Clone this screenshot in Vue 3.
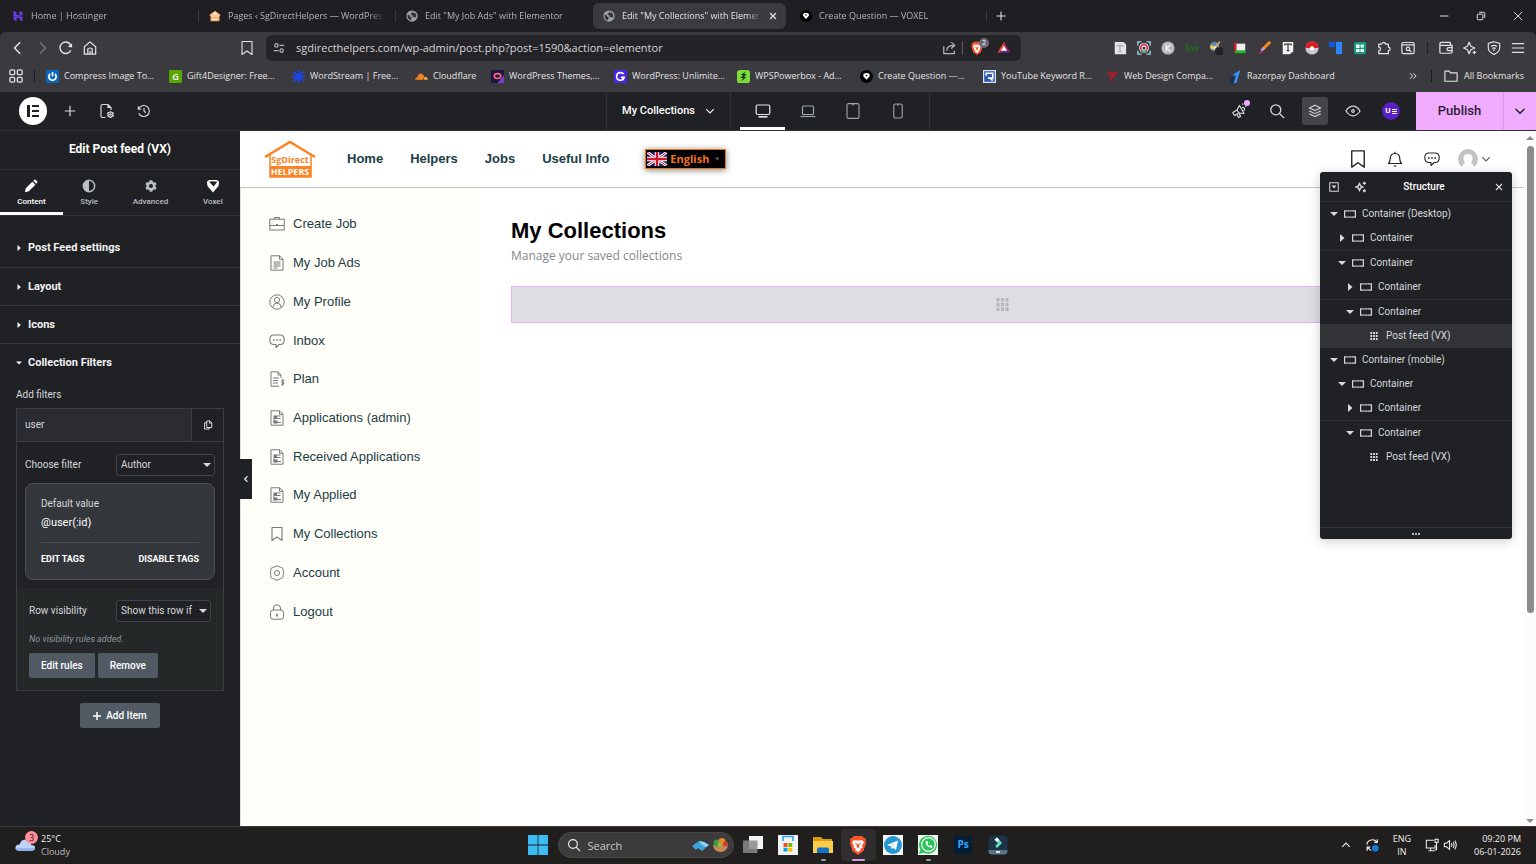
<script setup>
import { ref } from 'vue'

// Browser tabs
const tabs = [
  { icon: 'hostinger', title: 'Home | Hostinger' },
  { icon: 'house', title: 'Pages ‹ SgDirectHelpers — WordPress' },
  { icon: 'globe', title: 'Edit "My Job Ads" with Elementor' },
  { icon: 'globe', title: 'Edit "My Collections" with Elementor', active: true },
  { icon: 'voxel-round', title: 'Create Question — VOXEL' }
]

// Entries with a "text" show lettering instead of a drawn icon
const extensions = [
  { icon: 'ext-text', label: 'Text tool' },
  { icon: 'ext-camera', label: 'Screen capture' },
  { icon: 'ext-k', label: 'Keywords' },
  { icon: 'ext-bw', label: 'BuiltWith', text: 'bw' },
  { icon: 'ext-picker', label: 'Color picker' },
  { icon: 'ext-flag', label: 'Screen flag' },
  { icon: 'ext-brush', label: 'Brush' },
  { icon: 'ext-type', label: 'Font finder' },
  { icon: 'ext-ball', label: 'Ball' },
  { icon: 'ext-blue', label: 'Blocks' },
  { icon: 'ext-green', label: 'Apps' },
  { icon: 'puzzle', label: 'Extensions' },
  { icon: 'window-search', label: 'Search tabs' }
]

const browserTools = [
  { icon: 'wallet', label: 'Wallet' },
  { icon: 'leo', label: 'Leo AI' },
  { icon: 'vpn', label: 'VPN' },
  { icon: 'menu', label: 'Menu' }
]

const bookmarks = [
  { icon: 'bm-power', title: 'Compress Image To...' },
  { icon: 'bm-g', title: 'Gift4Designer: Free...', text: 'G' },
  { icon: 'bm-burst', title: 'WordStream | Free...' },
  { icon: 'bm-cloud', title: 'Cloudflare', short: true },
  { icon: 'bm-theme', title: 'WordPress Themes,...' },
  { icon: 'bm-gblue', title: 'WordPress: Unlimite...' },
  { icon: 'bm-wps', title: 'WPSPowerbox - Ad...' },
  { icon: 'voxel-round', title: 'Create Question —...' },
  { icon: 'bm-yt', title: 'YouTube Keyword R...' },
  { icon: 'bm-seven', title: 'Web Design Compa...' },
  { icon: 'bm-razor', title: 'Razorpay Dashboard' }
]

// Editor
const devices = ['desktop', 'laptop', 'tablet', 'mobile']
const activeDevice = ref('desktop')

const panelTabs = [
  { icon: 'pencil', label: 'Content' },
  { icon: 'contrast', label: 'Style' },
  { icon: 'gear', label: 'Advanced' },
  { icon: 'voxel', label: 'Voxel' }
]
const activePanelTab = ref('Content')

const sections = ['Post Feed settings', 'Layout', 'Icons']

const filter = ref('Author')
const visibility = ref('Show this row if')

// Site preview
const siteNav = ['Home', 'Helpers', 'Jobs', 'Useful Info']

const accountMenu = [
  { icon: 'briefcase', label: 'Create Job' },
  { icon: 'doc', label: 'My Job Ads' },
  { icon: 'profile', label: 'My Profile' },
  { icon: 'chat', label: 'Inbox' },
  { icon: 'plan', label: 'Plan' },
  { icon: 'resume', label: 'Applications (admin)' },
  { icon: 'resume', label: 'Received Applications' },
  { icon: 'resume', label: 'My Applied' },
  { icon: 'bookmark', label: 'My Collections' },
  { icon: 'account', label: 'Account' },
  { icon: 'lock', label: 'Logout' }
]

// Structure tree
const tree = [
  { level: 0, open: true, label: 'Container (Desktop)' },
  { level: 1, open: false, label: 'Container' },
  { level: 1, open: true, label: 'Container', line: true },
  { level: 2, open: false, label: 'Container' },
  { level: 2, open: true, label: 'Container', line: true },
  { level: 3, widget: true, label: 'Post feed (VX)', selected: true },
  { level: 0, open: true, label: 'Container (mobile)' },
  { level: 1, open: true, label: 'Container' },
  { level: 2, open: false, label: 'Container' },
  { level: 2, open: true, label: 'Container', line: true },
  { level: 3, widget: true, label: 'Post feed (VX)' }
]

const taskApps = [
  { icon: 'task-view', label: 'Task view' },
  { icon: 'store', label: 'Microsoft Store' },
  { icon: 'explorer', label: 'File Explorer', running: true },
  { icon: 'brave', label: 'Brave', active: true },
  { icon: 'telegram', label: 'Telegram' },
  { icon: 'whatsapp', label: 'WhatsApp', running: true },
  { icon: 'photoshop', label: 'Photoshop', text: 'Ps' },
  { icon: 'filmora', label: 'Filmora' }
]
</script>

<template>
  <div class="screen">
    <!-- Icon sprite -->
    <svg class="sprite" aria-hidden="true">
      <symbol id="hostinger" viewBox="0 0 16 16"><path fill="#673de6" d="M2 1l4 2v3.500h4.500l3.500 2H2zM10 1l4 2v4.500l-4-2zM2 8.500l4 2V15l-4-2zM2 9h12v6l-4-2v-2.500H5z" /></symbol>
      <symbol id="house" viewBox="0 0 16 16"><path fill="#f6ad6c" d="M8 1l7 5v2h-1v7H2V8H1V6z" /><path d="M3 8h10M4 12.500h8" stroke="#fff" stroke-width="1.500" stroke-dasharray="2 .6" /><path d="M4 6l4-3 4 3z" fill="#fff" /></symbol>
      <symbol id="globe" viewBox="0 0 16 16"><circle cx="8" cy="8" r="7.500" fill="#9aa0a6" /><path fill="#303136" d="M9 2c-1 1-.5 2-2 2.500S6 6 7.500 6.500s2 1.500 1 3-3-1-4-2.500-2.500-.5-2.500.5c0 3 2 5.500 4.500 6 .5-1.500 0-2 1-3 1.500-.5 2-1.500 3.500-1 1 0 1.500.5 2.500-.5.5-3-1-5-2-5.500-.5 1-2 .5-2.500-1.500z" /></symbol>
      <symbol id="voxel-round" viewBox="0 0 16 16"><circle cx="8" cy="8" r="8" fill="#000" /><path fill="#fff" d="M4 5.500L6 4h4l2 1.500-.3 2.500L8 12 4.300 8z" /><path d="M6.500 6h3L8 8z" fill="#000" /></symbol>
      <symbol id="voxel" viewBox="0 0 16 16"><path fill="#fff" d="M1 3l2.500-2h9L15 3l-.7 5L8 15.500 1.700 8z" /><path d="M3.500 3q4-1 9.500 0L8.700 8.500z" fill="#1f2124" /></symbol>
      <symbol id="close" viewBox="0 0 16 16"><path d="M2 2l12 12M14 2L2 14" stroke="currentColor" stroke-width="2.400" /></symbol>
      <symbol id="x-thin" viewBox="0 0 16 16"><path d="M1.500 1.500l13 13M14.500 1.500l-13 13" stroke="currentColor" stroke-width="1.500" /></symbol>
      <symbol id="plus" viewBox="0 0 16 16"><path d="M8 2v12M2 8h12" stroke="currentColor" stroke-width="1.400" /></symbol>
      <symbol id="plus-bold" viewBox="0 0 16 16"><path d="M8 0v16M0 8h16" stroke="currentColor" stroke-width="3" /></symbol>
      <symbol id="minimize" viewBox="0 0 16 16"><path d="M2 8h13" stroke="currentColor" stroke-width="1.600" /></symbol>
      <symbol id="restore" viewBox="0 0 16 16" fill="none"><rect x="2" y="5" width="9" height="9" rx="1.500" stroke="currentColor" stroke-width="1.600" /><path d="M5 2h6.500q2.500 0 2.500 2.500V11" stroke="currentColor" stroke-width="1.600" /></symbol>
      <symbol id="back" viewBox="0 0 16 16"><path d="M10.500 1.500L4 8l6.500 6.500" fill="none" stroke="currentColor" stroke-width="1.700" /></symbol>
      <symbol id="back-bold" viewBox="0 0 16 16"><path d="M11 2.500L5.500 8l5.500 5.500" fill="none" stroke="currentColor" stroke-width="2.800" /></symbol>
      <symbol id="forward" viewBox="0 0 16 16"><path d="M5.500 1.500L12 8l-6.500 6.500" fill="none" stroke="currentColor" stroke-width="1.700" /></symbol>
      <symbol id="reload" viewBox="0 0 16 16"><path d="M13.500 10.500A6.500 6.500 0 1 1 13 4" fill="none" stroke="currentColor" stroke-width="1.600" /><path d="M15 2.500v5l-5-1z" fill="currentColor" /></symbol>
      <symbol id="home" viewBox="0 0 16 16"><path d="M1.500 6.500L8 1l6.500 5.500V15h-13zM5.500 15V9.500Q5.500 8 8 8t2.500 1.500V15M8 11v4" fill="none" stroke="currentColor" stroke-width="1.400" stroke-linejoin="round" /></symbol>
      <symbol id="bookmark" viewBox="0 0 16 16"><path d="M3 1.500h10v13l-5-3.500-5 3.500z" fill="none" stroke="currentColor" stroke-width="1.100" stroke-linejoin="round" /></symbol>
      <symbol id="tune" viewBox="0 0 16 16"><g fill="none" stroke="currentColor" stroke-width="1.700"><circle cx="4.500" cy="4.500" r="2.200" /><path d="M8.500 4.500H15M1 11.500h6.500" /><circle cx="11.500" cy="11.500" r="2.200" /></g></symbol>
      <symbol id="share" viewBox="0 0 16 16"><path d="M2 6v8.500h12V11M5.500 11c0-4 3-6 8-6M10.500 1.500L14.500 5l-4 3.500" fill="none" stroke="currentColor" stroke-width="1.500" /></symbol>
      <symbol id="brave" viewBox="0 0 20 20"><path fill="#fb542b" d="M6 1h8l2 2 2 .5-.5 3L18 8l-2.500 8L10 20l-5.500-4L2 8l.5-1.500L2 3.500 4 3z" /><path fill="#fff" d="M6 5l2 .5h4l2-.5 2 2.500-2 3 .5 2-2.500 1.500 1 1-3 2-3-2 1-1L5.500 12.500l.5-2-2-3z" /><path fill="#fb542b" d="M6.500 7.500l2.500 1-.5 1.500zM13.500 7.500l-2.500 1 .5 1.500zM8.500 12L10 13l1.500-1-.5-3H9z" /></symbol>
      <symbol id="bat" viewBox="0 0 16 16"><path d="M8 1l3.200 6L8 8.500 5 13.500H.5z" fill="#ff4724" /><path d="M8 1l7.500 12.500-4-2.500L8 5z" fill="#9e1f63" /><path d="M.5 13.500h15L11.500 11h-7z" fill="#662d91" /><path d="M8 5.500l3.500 5.500h-7z" fill="#fff" /></symbol>

      <symbol id="ext-text" viewBox="0 0 16 16"><path d="M2 1h10l3 3v11H2z" fill="#e4e4e4" /><path d="M5 5h6v1.500M5 6.500V5M8 5v7M6.500 12h3" stroke="#aaa" stroke-width="1.500" fill="none" /></symbol>
      <symbol id="ext-camera" viewBox="0 0 16 16"><path d="M1 5V1h4M11 1h4v4M15 11v4h-4M5 15H1v-4" fill="none" stroke="#8fd6ea" stroke-width="1.600" /><circle cx="8" cy="8" r="5.500" fill="#fff" /><circle cx="8" cy="8" r="3.800" fill="none" stroke="#e33b42" stroke-width="2" /><path d="M5 11a4 4 0 0 0 6 0" stroke="#27b08b" stroke-width="2" fill="none" /><circle cx="8" cy="8" r="1.800" fill="#29356c" /></symbol>
      <symbol id="ext-k" viewBox="0 0 16 16"><circle cx="8" cy="8" r="7.500" fill="#b9b9b9" /><path d="M6 4v8M11 4L6.500 8.200 11 12" stroke="#f2f2f2" stroke-width="1.600" fill="none" /></symbol>
      <symbol id="ext-picker" viewBox="0 0 18 18"><circle cx="7" cy="7" r="6" fill="#5b86b5" /><path d="M1 7q3-3 6 0t6-1l-2 5H3z" fill="#f3c842" /><path d="M14 1L7 9" stroke="#e6b46a" stroke-width="2" /><circle cx="8" cy="9" r="2" fill="#fff" /><rect x="8" y="8" width="10" height="10" rx="2.500" fill="#232227" /></symbol>
      <symbol id="ext-flag" viewBox="0 0 16 16"><path d="M1 2h3v11H2z" fill="#e32222" /><path d="M4 3h10v8H4z" fill="#eee" /><path d="M3 11h11l1 3H2z" fill="#18c018" /></symbol>
      <symbol id="ext-brush" viewBox="0 0 16 16"><path d="M14 2L8 8" stroke="#f28c1c" stroke-width="3.500" stroke-linecap="round" /><path d="M8 8l-3 3" stroke="#b9a1d9" stroke-width="3" /><path d="M5 10l2 2-4 2.500-1-.5z" fill="#d5395b" /></symbol>
      <symbol id="ext-type" viewBox="0 0 16 16"><path d="M2 1h12v11l-4 3H2z" fill="#f2f2f2" /><path d="M4.500 5V3.500h7V5M8 3.500V11M6.500 11h3" stroke="#333" stroke-width="1.300" fill="none" /></symbol>
      <symbol id="ext-ball" viewBox="0 0 16 16"><circle cx="8" cy="8" r="7.500" fill="#c9c9c9" /><path d="M.5 8a7.500 7.500 0 0 1 15 0z" fill="#e01d1d" /><circle cx="8" cy="8.500" r="2.500" fill="#fff" /></symbol>
      <symbol id="ext-blue" viewBox="0 0 16 16"><path d="M0 1h7v6H0z" fill="#0b5be0" /><path d="M8 1h7v14H8z" fill="#2a86ff" /></symbol>
      <symbol id="ext-green" viewBox="0 0 16 16"><rect x="1" y="1" width="14" height="14" rx="2" fill="#139a80" /><path d="M3.500 4h4v4h-4zM3.500 9h4v3.500h-4zM8.500 9h4v3.500h-4z" fill="#fff" /><circle cx="10.500" cy="5.800" r="2.200" fill="#d3f3ea" /></symbol>
      <symbol id="puzzle" viewBox="0 0 16 16"><path d="M2 3.500h3.500a2 2 0 1 1 4 0H13V7a2 2 0 1 1 0 4v3.500H2V11a2 2 0 1 0 0-4z" fill="none" stroke="currentColor" stroke-width="1.400" stroke-linejoin="round" /></symbol>
      <symbol id="window-search" viewBox="0 0 16 16"><g fill="none" stroke="currentColor" stroke-width="1.400"><rect x="1" y="1.700" width="14" height="12.600" rx="1.500" /><path d="M1 4.500h14M9.500 10.500l2.500 2" /><circle cx="8" cy="9" r="2" /></g></symbol>
      <symbol id="wallet" viewBox="0 0 16 16"><g fill="none" stroke="currentColor" stroke-width="1.400"><path d="M13 5V2.500q0-1-1-1H3Q1 1.500 1 3.500v9Q1 14 2.500 14H13q2 0 2-2V5H3Q1 5 1 3.500" /><path d="M15 7.500h-4a1.800 1.800 0 0 0 0 3.600h4" /></g></symbol>
      <symbol id="leo" viewBox="0 0 16 16"><g fill="none" stroke="currentColor" stroke-width="1.400" stroke-linejoin="round"><path d="M7 1.500L9 6l4.500 2L9 10l-2 4.500L5 10 .8 8 5 6z" /><path d="M13 11v4M11 13h4" /></g></symbol>
      <symbol id="vpn" viewBox="0 0 16 16"><g fill="none" stroke="currentColor" stroke-width="1.300"><path d="M8 .8l6.500 2V8c0 4-3.500 6-6.500 7.300C5 14 1.500 12 1.500 8V2.800z" /><path d="M4.500 6.200q3.500-2.400 7 0M6 8.500q2-1.400 4 0" /></g><circle cx="8" cy="10.500" r="1" fill="currentColor" /></symbol>
      <symbol id="menu" viewBox="0 0 16 16"><path d="M1 3h14M1 8h14M1 13h14" stroke="currentColor" stroke-width="1.400" /></symbol>

      <symbol id="apps" viewBox="0 0 16 16"><g fill="none" stroke="currentColor" stroke-width="1.500"><rect x="1" y="1" width="5.500" height="5.500" rx="1.500" /><rect x="9.500" y="1" width="5.500" height="5.500" rx="1.500" /><rect x="1" y="9.500" width="5.500" height="5.500" rx="1.500" /><rect x="9.500" y="9.500" width="5.500" height="5.500" rx="1.500" /></g></symbol>
      <symbol id="bm-power" viewBox="0 0 16 16"><rect width="16" height="16" fill="#0b66b9" /><path d="M5 4.800a4.500 4.500 0 1 0 6 0M8 2.500V8" stroke="#fff" stroke-width="2" fill="none" /></symbol>
      <symbol id="bm-burst" viewBox="0 0 16 16"><path d="M8 1v14M1 8h14M3 3l10 10M13 3L3 13" stroke="#1c45e8" stroke-width="2.400" stroke-linecap="round" /></symbol>
      <symbol id="bm-cloud" viewBox="0 0 16 16"><path d="M0 12q0-3 3-3.200Q4 4 8 4.500q3 .5 3.300 3.500L10 12z" fill="#f48120" /><path d="M10.800 12q.5-4 2-4 3 1 3.200 4z" fill="#faad3f" /></symbol>
      <symbol id="bm-theme" viewBox="0 0 16 16"><rect width="16" height="16" fill="#1b1541" /><path d="M8 16L16 6v10z" fill="#7a3bd0" /><ellipse cx="8" cy="7.500" rx="4" ry="3" fill="none" stroke="#ff6474" stroke-width="2" /></symbol>
      <symbol id="bm-gblue" viewBox="0 0 16 16"><rect width="16" height="16" rx="2" fill="#4527e8" /><path d="M12 5Q10.500 3.200 8 3.200A4.700 4.700 0 1 0 12.500 9H8.500" stroke="#fff" stroke-width="2" fill="none" /></symbol>
      <symbol id="bm-wps" viewBox="0 0 16 16"><rect width="16" height="16" rx="3.500" fill="#7bdc3c" /><path d="M11 1.500L4.500 6 8 6.500 4 9.500l3.500.3L5 14l6.500-5L8.500 8.500 12 5.500 8.700 5z" fill="#17351a" /></symbol>
      <symbol id="bm-yt" viewBox="0 0 16 16"><rect width="16" height="16" fill="#d8e2f5" /><path d="M1.500 1.500h13v13h-13z" fill="#2b57b5" /><path d="M4 7V4h8v6H6M9 10l3 3" stroke="#fff" stroke-width="2" fill="none" /></symbol>
      <symbol id="bm-seven" viewBox="0 0 16 16"><path d="M2 3h12l-4.500 6H8L6 14.500 4.500 13 7 8H3.500L5 6h4.500l.8-1H1z" fill="#d2121a" /></symbol>
      <symbol id="bm-razor" viewBox="0 0 16 16"><path d="M6 5l8-5-5 16H6l3-10-4 2.500z" fill="#3395ff" /><path d="M1 16L3 9.500 7 7l-2.500 9z" fill="#0b2a66" /></symbol>
      <symbol id="more" viewBox="0 0 16 16"><path d="M3 3.500L7.500 8 3 12.500M8.500 3.500L13 8l-4.500 4.500" fill="none" stroke="currentColor" stroke-width="1.600" /></symbol>
      <symbol id="folder" viewBox="0 0 16 16"><path d="M1 2.500h5l1.500 2H15V14H1z" fill="none" stroke="currentColor" stroke-width="1.300" stroke-linejoin="round" /></symbol>

      <symbol id="page-settings" viewBox="0 0 16 16"><g fill="none" stroke="currentColor" stroke-width="1.200"><path d="M6.500 14.500H3.500q-1.500 0-1.500-1.500V3q0-1.500 1.500-1.500H9L12 4.500V7M9 1.500v3h3" /><circle cx="11.500" cy="11.500" r="2.500" /><circle cx="11.500" cy="11.500" r=".7" /><path d="M11.500 8.200v1M11.500 14v1M8.400 9.800l1 .6M13.700 12.600l1 .6M14.600 9.800l-1 .6M9.400 12.600l-1 .6" /></g></symbol>
      <symbol id="history" viewBox="0 0 16 16"><path d="M1.800 6A6.300 6.300 0 1 1 2 10.500M1.500 2.500V6H5M8 4.500V8l2 2" fill="none" stroke="currentColor" stroke-width="1.300" /></symbol>
      <symbol id="chevron" viewBox="0 0 16 16"><path d="M2 5l6 6 6-6" fill="none" stroke="currentColor" stroke-width="1.700" /></symbol>
      <symbol id="desktop" viewBox="0 0 16 16"><g fill="none" stroke="currentColor" stroke-width="1.200"><rect x="1.200" y="2" width="13.600" height="9.500" rx="1.500" /><path d="M3.500 13.800h9" stroke-width="1.600" /></g></symbol>
      <symbol id="laptop" viewBox="0 0 16 16"><g fill="none" stroke="currentColor" stroke-width="1.200"><rect x="2.500" y="3" width="11" height="8.500" rx="1" /><path d="M.5 13.500h15" /></g></symbol>
      <symbol id="tablet" viewBox="0 0 16 16"><g fill="none" stroke="currentColor" stroke-width="1.100"><rect x="2" y=".6" width="12" height="14.800" rx="1.500" /><path d="M7 1.800h2" /></g></symbol>
      <symbol id="mobile" viewBox="0 0 16 16"><g fill="none" stroke="currentColor" stroke-width="1.100"><rect x="3.800" y="1" width="8.400" height="14" rx="1.500" /><path d="M7 2h2" /></g></symbol>
      <symbol id="megaphone" viewBox="0 0 16 16"><g fill="none" stroke="currentColor" stroke-width="1.200" stroke-linejoin="round"><path d="M8.500 2.500l4.500 8-5-.5-4.500 2.500-1.700-3L6 7z" /><path d="M6 7l2 3M6 11.500l1.500 3 2-1-1.200-3M11 4.500q2-.5 2.500 1t-1 2.500M11.500 1.800L12 .6M14 3.500l1.300-.6" /></g></symbol>
      <symbol id="search" viewBox="0 0 16 16"><g fill="none" stroke="currentColor" stroke-width="1.300"><circle cx="6.800" cy="6.800" r="5" /><path d="M10.500 10.500l4.500 4.500" /></g></symbol>
      <symbol id="layers" viewBox="0 0 16 16"><path d="M8 1.500L14.500 4.500 8 7.500 1.500 4.500zM1.500 8L8 11l6.500-3M1.500 11.200L8 14.200l6.500-3" fill="none" stroke="currentColor" stroke-width="1.200" stroke-linejoin="round" /></symbol>
      <symbol id="eye" viewBox="0 0 16 16"><g fill="none" stroke="currentColor" stroke-width="1.200"><path d="M1 8Q4 3.200 8 3.200T15 8Q12 12.800 8 12.800T1 8z" /><circle cx="8" cy="8" r="1.300" /></g></symbol>

      <symbol id="pencil" viewBox="0 0 16 16"><path d="M1 15l1-4.500L9.500 3l3.500 3.500L5.500 14zM10.500 2L12 .8q.8-.5 1.500.2l1.500 1.500q.7.700.2 1.500L14 5.500z" fill="currentColor" /></symbol>
      <symbol id="contrast" viewBox="0 0 16 16"><circle cx="8" cy="8" r="6.500" fill="none" stroke="currentColor" stroke-width="1.600" /><path d="M8 1.500v13a6.500 6.500 0 0 1 0-13z" fill="currentColor" /></symbol>
      <symbol id="gear" viewBox="0 0 16 16"><circle cx="8" cy="8" r="3.800" fill="none" stroke="currentColor" stroke-width="3" /><path d="M8 1.500v3M8 11.500v3M2.400 4.700L5 6.200M11 9.800l2.600 1.500M2.400 11.300L5 9.800M11 6.200l2.600-1.500" stroke="currentColor" stroke-width="3.200" /></symbol>
      <symbol id="tri-right" viewBox="0 0 8 8"><path d="M2 0l4.500 4L2 8z" fill="currentColor" /></symbol>
      <symbol id="tri-down" viewBox="0 0 8 8"><path d="M0 2l4 4 4-4z" fill="currentColor" /></symbol>
      <symbol id="copy" viewBox="0 0 16 16"><g fill="none" stroke="currentColor" stroke-width="1.600" stroke-linejoin="round"><path d="M6 1.500h5L14 4.500V12H6zM10.500 1.500V5H14M6 4.500H2.500v10H10V12" /></g></symbol>

      <symbol id="briefcase" viewBox="0 0 16 16"><g fill="none" stroke="currentColor" stroke-width="1"><rect x=".8" y="3.200" width="14.400" height="10.800" /><path d="M5.500 3V1.500h5V3M.8 9.500h14.400M7 8.500h2" /></g></symbol>
      <symbol id="doc" viewBox="0 0 16 16"><g fill="none" stroke="currentColor" stroke-width="1"><path d="M2 .8h8.500L14 4.200V15.200H2zM10.500 .8v3.500H14M4.500 7h7M4.500 9h7M4.500 11h7M4.500 13h4" /></g></symbol>
      <symbol id="profile" viewBox="0 0 16 16"><g fill="none" stroke="currentColor" stroke-width="1"><circle cx="8" cy="8" r="7.200" /><circle cx="8" cy="6" r="2.600" /><path d="M4 13q.5-4 4-4t4 4" /></g></symbol>
      <symbol id="chat" viewBox="0 0 16 16"><path d="M5 2h6q4.200 0 4.200 4.700T11 11.500h-.8L7 14.500v-3H5Q.8 11.500.8 6.700T5 2z" fill="none" stroke="currentColor" stroke-width="1.100" stroke-linejoin="round" /><path d="M4 7h1.600M7.200 7h1.600M10.400 7H12" stroke="currentColor" stroke-width="1.400" /></symbol>
      <symbol id="plan" viewBox="0 0 16 16"><g fill="none" stroke="currentColor" stroke-width="1"><path d="M10 15.200H2V.8h7L12 4v3M9 .8V4h3M4 7h6M4 9.500h5M4 12h5" /><path d="M15.300 9.500q-2.800-1-2.800.8t2.500 1.400q.5 2-2.800 1.500M13.800 8v7" /></g></symbol>
      <symbol id="resume" viewBox="0 0 16 16"><g fill="none" stroke="currentColor" stroke-width="1"><path d="M2 .8h8.500L14 4.200V15.200H2zM10.500 .8v3.500H14M5 6h6.500M5 8.500h6.500M8 12.500h4M5 5.500v7" /></g><path d="M4.500 10.500h4v3h-4zM5 6h3v2.500H5z" fill="currentColor" /></symbol>
      <symbol id="account" viewBox="0 0 16 16"><g fill="none" stroke="currentColor" stroke-width="1" stroke-linejoin="round"><path d="M6 1.500Q8 .2 10 1.500q1 1 2.500 1 2.200.5 1.800 3-.3 1.200.4 2.500-.7 1.300-.4 2.500.4 2.500-1.800 3-1.500 0-2.500 1-2 1.300-4 0-1-1-2.500-1-2.200-.5-1.800-3 .3-1.200-.4-2.500.7-1.300.4-2.500-.4-2.500 1.800-3 1.500 0 2.500-1z" /><circle cx="8" cy="8" r="2.500" /></g></symbol>
      <symbol id="lock" viewBox="0 0 16 16"><g fill="none" stroke="currentColor" stroke-width="1"><rect x="1.500" y="6" width="13" height="9.200" rx="2.500" /><path d="M4.500 6V4q0-3.200 3.500-3.200T11.500 4v2" /></g><path d="M8 9.500v3" stroke="currentColor" stroke-width="1.600" /></symbol>
      <symbol id="bell" viewBox="0 0 16 16"><path d="M1.500 12.500h13q-1.700-2-1.700-4.500Q12.800 2.500 8 2.500T3.200 8Q3.200 10.500 1.500 12.500zM8 .8v1.700M6.500 15h3" fill="none" stroke="currentColor" stroke-width="1.200" stroke-linejoin="round" /></symbol>
      <symbol id="grid" viewBox="0 0 13 13"><path d="M2 0v13M6.500 0v13M11 0v13" stroke="currentColor" stroke-width="3" stroke-dasharray="3.400 1.400" /></symbol>
      <symbol id="container" viewBox="0 0 12 8"><rect x=".6" y=".9" width="10.800" height="6.200" fill="none" stroke="currentColor" stroke-width="1.200" /><path d="M3 1h6M3 7h6" stroke="#1f2124" stroke-dasharray=".5 1.500" /></symbol>
      <symbol id="expand" viewBox="0 0 16 16"><rect x="1.200" y="1.200" width="13.600" height="13.600" fill="none" stroke="currentColor" stroke-width="1.600" /><path d="M4 5.500h8L8 10.500z" fill="currentColor" /></symbol>
      <symbol id="sparkle" viewBox="0 0 16 16"><path d="M6 3.500l1.500 3L10.500 8 7.500 9.500 6 12.500 4.500 9.500 1.500 8l3-1.500z" fill="none" stroke="currentColor" stroke-width="1.800" /><path d="M12.500 1v4M10.500 3h4M12.500 11v4M10.500 13h4" stroke="currentColor" stroke-width="1.800" /></symbol>

      <symbol id="windows" viewBox="0 0 20 20"><path d="M0 0h9.600v9.600H0zM10.400 0H20v9.600h-9.600zM0 10.400h9.600V20H0zM10.400 10.400H20V20h-9.600z" fill="#3cbcf5" /></symbol>
      <symbol id="search-art" viewBox="0 0 38 16"><path d="M1 9l7-5 5 1 5 3-7 6-4-3-2 2z" fill="#3fa3d8" /><path d="M8 4l5 1 5 3-3 2-5-3z" fill="#8fd3f0" /><path d="M22 8h15q-1 7-7.500 7T22 8z" fill="#c98a5a" /><circle cx="26" cy="6" r="3.500" fill="#3f9a4a" /><circle cx="31" cy="4.500" r="3.500" fill="#e28a2b" /><circle cx="34.500" cy="7" r="2.500" fill="#d33b2f" /><circle cx="28.500" cy="8" r="2" fill="#8bc34a" /></symbol>
      <symbol id="task-view" viewBox="0 0 20 20"><path d="M6 1h14v13H6z" fill="#f3f3f3" /><path d="M0 5.500h14.500V18H0z" fill="#8a8a8a" opacity=".85" /></symbol>
      <symbol id="store" viewBox="0 0 20 20"><path d="M0 0h20v20H0z" fill="#f1f3f5" /><path d="M5 6V1.500h10V6" fill="none" stroke="#28a8ea" stroke-width="1.600" /><path d="M5.500 8H9.500v4h-4z" fill="#f25022" /><path d="M10.300 8h4v4h-4z" fill="#7fba00" /><path d="M5.500 12.800h4v3.700h-4z" fill="#00a4ef" /><path d="M10.300 12.800h4v3.700h-4z" fill="#ffb900" /></symbol>
      <symbol id="explorer" viewBox="0 0 20 20"><path d="M0 2h8l2 2h9v6H0z" fill="#d99b13" /><path d="M0 6h20v12H0z" fill="#fbcd49" /><path d="M4 18v-4q0-1.500 1.500-1.500h9q1.500 0 1.500 1.500v4z" fill="#1272cc" /></symbol>
      <symbol id="telegram" viewBox="0 0 20 20"><path d="M0 0h20v20H0z" fill="#f3f7fa" /><circle cx="10" cy="10" r="9" fill="#2597d3" /><path d="M4 10l11-4.500L13 15l-3-2.200L8.500 14.500 8 11.500z" fill="#fff" /><path d="M8 11.500l5-4-4 4.500z" fill="#8cc4e4" /></symbol>
      <symbol id="whatsapp" viewBox="0 0 20 20"><path d="M0 0h20v20H0z" fill="#f3f7f4" /><path d="M1 19l1.400-4.500A9 9 0 1 1 6 17.800z" fill="#2bc35c" /><circle cx="10.500" cy="9.500" r="6.800" fill="none" stroke="#fff" stroke-width="1.200" /><path d="M7.500 6.500q0 5.500 6.500 6.500l.5-2-2-1-1 1q-1.500-.7-2-2l.8-1-1-2z" fill="#fff" /></symbol>
      <symbol id="filmora" viewBox="0 0 20 20"><rect x=".5" y=".5" width="19" height="19" rx="3.500" fill="#1d3347" /><path d="M.5 15h19v1q0 3.500-3.500 3.500H4Q.5 19.500.5 16z" fill="#5b7386" /><path d="M6.500 4.500L9 2.500 14 8 9 13 7.200 11 10 8z" fill="#5fe3c3" /><path d="M6.500 4.500L9 2.500l2.500 2.700-2.700 1.800z" fill="#fff" /><path d="M8 17h4" stroke="#fff" stroke-width="1.500" /></symbol>
      <symbol id="weather" viewBox="0 0 22 14"><path d="M5 13Q0 13 .5 9.500T5 6.500Q6 1 11 1.500t6 5.500q4 0 4 3t-4 3z" fill="#bcd4fa" /><path d="M5 13Q1 13 .6 10.500H21q-.5 2.500-4 2.500z" fill="#8eb3f0" /></symbol>
      <symbol id="sync" viewBox="0 0 16 16"><path d="M2 7.500a6.500 6.500 0 0 1 11.500-3M14 1.500v3.500h-3.500M2.500 10.500l4.500 4M2.500 14.500v-4H6" fill="none" stroke="currentColor" stroke-width="1.300" /><circle cx="11.800" cy="11.800" r="3.800" fill="#0f7ddb" /></symbol>
      <symbol id="network" viewBox="0 0 16 16"><g fill="none" stroke="currentColor" stroke-width="1.200"><path d="M10 2.500H1.500v9h10V8M4 14.500h7M6.500 11.500v3" /><rect x="11.500" y="1.500" width="3.500" height="3.500" /><path d="M13.200 5v8.500H11" /></g></symbol>
      <symbol id="speaker" viewBox="0 0 16 16"><path d="M1.500 6H4l3.500-3v10L4 10H1.500zM9.500 6q1.300 2 0 4M11.500 4.500q2.300 3.500 0 7M13.500 3q3.200 5 0 10" fill="none" stroke="currentColor" stroke-width="1.200" /></symbol>
    </svg>

    <!-- Browser window -->
    <header class="browser">
      <div class="tab-strip">
        <div v-for="(tab, i) in tabs" :key="i" class="tab" :class="{ active: tab.active, plain: i === 2 }">
          <svg class="i12"><use :href="'#' + tab.icon" /></svg>
          <span class="tab-title">{{ tab.title }}</span>
          <button v-if="tab.active" class="icon-btn tab-close" aria-label="Close tab">
            <svg class="i8"><use href="#close" /></svg>
          </button>
        </div>
        <button class="icon-btn new-tab" aria-label="New tab"><svg class="i12"><use href="#plus" /></svg></button>
        <div class="window-buttons">
          <button class="icon-btn" aria-label="Minimize"><svg class="i10"><use href="#minimize" /></svg></button>
          <button class="icon-btn" aria-label="Restore"><svg class="i10"><use href="#restore" /></svg></button>
          <button class="icon-btn" aria-label="Close"><svg class="i10"><use href="#x-thin" /></svg></button>
        </div>
      </div>

      <div class="toolbar">
        <button class="icon-btn tool" aria-label="Back"><svg class="i14"><use href="#back" /></svg></button>
        <button class="icon-btn tool dim" aria-label="Forward"><svg class="i14"><use href="#forward" /></svg></button>
        <button class="icon-btn tool" aria-label="Reload"><svg class="i14"><use href="#reload" /></svg></button>
        <button class="icon-btn tool" aria-label="Home"><svg class="i14"><use href="#home" /></svg></button>
        <div class="address-zone">
          <button class="icon-btn tool" aria-label="Bookmark this page"><svg class="i16"><use href="#bookmark" /></svg></button>
          <div class="address">
            <svg class="i12"><use href="#tune" /></svg>
            <input type="text" aria-label="Address" value="sgdirecthelpers.com/wp-admin/post.php?post=1590&action=elementor">
            <svg class="i14"><use href="#share" /></svg>
            <span class="address-sep"></span>
            <span class="shield">
              <svg class="i14"><use href="#brave" /></svg>
              <span class="shield-count">2</span>
            </span>
            <svg class="i14"><use href="#bat" /></svg>
          </div>
        </div>
        <button v-for="ext in extensions" :key="ext.icon" class="icon-btn tool" :aria-label="ext.label">
          <span v-if="ext.text" :class="ext.icon">{{ ext.text }}</span>
          <svg v-else class="i14"><use :href="'#' + ext.icon" /></svg>
        </button>
        <span class="bar-sep"></span>
        <button v-for="tool in browserTools" :key="tool.icon" class="icon-btn tool" :aria-label="tool.label">
          <svg class="i14"><use :href="'#' + tool.icon" /></svg>
        </button>
      </div>

      <nav class="bookmarks">
        <button class="icon-btn apps-btn" aria-label="Apps"><svg class="i14"><use href="#apps" /></svg></button>
        <span class="bar-sep"></span>
        <a v-for="bm in bookmarks" :key="bm.title" href="#" class="bm" :class="{ short: bm.short }">
          <span v-if="bm.text" :class="bm.icon">{{ bm.text }}</span>
          <svg v-else class="i13"><use :href="'#' + bm.icon" /></svg>
          <span>{{ bm.title }}</span>
        </a>
        <button class="icon-btn bm-more" aria-label="More bookmarks"><svg class="i10"><use href="#more" /></svg></button>
        <span class="bar-sep"></span>
        <a href="#" class="bm all"><svg class="i14"><use href="#folder" /></svg><span>All Bookmarks</span></a>
      </nav>
    </header>

    <!-- Editor top bar -->
    <div class="editor-bar">
      <div class="bar-left">
        <button class="e-logo" aria-label="Elementor">
          <i class="e-stem"></i>
          <i class="e-lines"></i>
        </button>
        <button class="icon-btn" aria-label="Add element"><svg class="i14"><use href="#plus" /></svg></button>
        <button class="icon-btn" aria-label="Page settings"><svg class="i16"><use href="#page-settings" /></svg></button>
        <button class="icon-btn" aria-label="History"><svg class="i14"><use href="#history" /></svg></button>
      </div>
      <div class="bar-center">
        <button class="doc-name">My Collections <svg class="i10"><use href="#chevron" /></svg></button>
        <div class="devices">
          <button
            v-for="device in devices"
            :key="device"
            class="icon-btn device"
            :class="{ active: device === activeDevice }"
            :aria-label="device"
            @click="activeDevice = device"
          >
            <svg class="i16"><use :href="'#' + device" /></svg>
          </button>
        </div>
      </div>
      <div class="bar-right">
        <button class="icon-btn news" aria-label="What's new"><svg class="i16"><use href="#megaphone" /></svg></button>
        <button class="icon-btn" aria-label="Finder"><svg class="i16"><use href="#search" /></svg></button>
        <button class="icon-btn layers" aria-label="Structure"><svg class="i14"><use href="#layers" /></svg></button>
        <button class="icon-btn" aria-label="Preview"><svg class="i16"><use href="#eye" /></svg></button>
        <button class="ue" aria-label="Ultimate Elementor">U<span class="ue-lines"></span></button>
        <button class="publish">Publish</button>
        <button class="publish-more" aria-label="Publish options"><svg class="i12"><use href="#chevron" /></svg></button>
      </div>
    </div>

    <main class="workspace">
      <!-- Left editor panel -->
      <aside class="panel">
        <h2 class="panel-title">Edit Post feed (VX)</h2>
        <div class="panel-tabs">
          <button
            v-for="tab in panelTabs"
            :key="tab.label"
            :class="{ active: tab.label === activePanelTab }"
            @click="activePanelTab = tab.label"
          >
            <svg class="i14"><use :href="'#' + tab.icon" /></svg>
            {{ tab.label }}
          </button>
        </div>
        <div class="sections">
          <button v-for="s in sections" :key="s" class="section">
            <svg class="i6"><use href="#tri-right" /></svg>{{ s }}
          </button>
          <button class="section open"><svg class="i6"><use href="#tri-down" /></svg>Collection Filters</button>
        </div>

        <div class="filters">
          <p class="filters-label">Add filters</p>
          <div class="repeater">
            <div class="repeater-head">
              <button class="repeater-name">user</button>
              <button class="repeater-copy" aria-label="Duplicate"><svg class="i10"><use href="#copy" /></svg></button>
            </div>
            <div class="repeater-body">
              <div class="field">
                <label for="choose-filter">Choose filter</label>
                <div class="select">
                  <select id="choose-filter" v-model="filter"><option>Author</option></select>
                  <svg class="i8"><use href="#tri-down" /></svg>
                </div>
              </div>
              <div class="tag-card">
                <p class="tag-label">Default value</p>
                <p class="tag-value">@user(:id)</p>
                <div class="tag-actions">
                  <button>EDIT TAGS</button>
                  <button>DISABLE TAGS</button>
                </div>
              </div>
            </div>
            <div class="visibility">
              <div class="field">
                <label for="row-visibility">Row visibility</label>
                <div class="select">
                  <select id="row-visibility" v-model="visibility"><option>Show this row if</option></select>
                  <svg class="i8"><use href="#tri-down" /></svg>
                </div>
              </div>
              <p class="no-rules">No visibility rules added.</p>
              <div class="rule-actions">
                <button class="btn">Edit rules</button>
                <button class="btn">Remove</button>
              </div>
            </div>
          </div>
          <button class="btn add-item"><svg class="i8"><use href="#plus-bold" /></svg>Add Item</button>
        </div>
        <button class="collapse" aria-label="Collapse panel"><svg class="i8"><use href="#back-bold" /></svg></button>
      </aside>

      <!-- Site preview -->
      <section class="site">
        <header class="site-header">
          <a href="#" class="site-logo" aria-label="SgDirect Helpers">
            <svg viewBox="0 0 52 38">
              <path d="M1 17L26 2l25 15" fill="none" stroke="#fb8323" stroke-width="2.500" />
              <path d="M6 14v23h41V14" fill="none" stroke="#fb8323" stroke-width="1.500" />
              <path d="M6 26h41v11H6z" fill="#fb8323" />
              <text x="26" y="23" text-anchor="middle" class="logo-a">SgDirect</text>
              <text x="26" y="35" text-anchor="middle" class="logo-b">HELPERS</text>
            </svg>
          </a>
          <nav class="site-nav">
            <a v-for="item in siteNav" :key="item" href="#">{{ item }}</a>
          </nav>
          <button class="lang">
            <svg class="flag" viewBox="0 0 20 14">
              <path d="M0 0h20v14H0z" fill="#12206e" />
              <path d="M0 0l20 14M20 0L0 14" stroke="#fff" stroke-width="2.800" />
              <path d="M0 0l20 14M20 0L0 14" stroke="#d0142c" stroke-width="1" />
              <path d="M10 0v14M0 7h20" stroke="#fff" stroke-width="4.500" />
              <path d="M10 0v14M0 7h20" stroke="#d0142c" stroke-width="2.600" />
            </svg>
            English <span class="lang-arrow">▼</span>
          </button>
          <div class="site-actions">
            <button class="icon-btn" aria-label="Saved"><svg class="i20"><use href="#bookmark" /></svg></button>
            <button class="icon-btn" aria-label="Notifications"><svg class="i16"><use href="#bell" /></svg></button>
            <button class="icon-btn" aria-label="Messages"><svg class="i16"><use href="#chat" /></svg></button>
            <button class="icon-btn user" aria-label="Account">
              <svg class="i20" viewBox="0 0 20 20">
                <circle cx="10" cy="10" r="10" fill="#c3c3c3" />
                <path d="M4 20q0-5 3-6Q5.500 12 5.500 9.500 5.500 5 10 5t4.500 4.500q0 2.500-1.500 4.500 3 1 3 6z" fill="#fff" />
              </svg>
              <svg class="i10"><use href="#chevron" /></svg>
            </button>
          </div>
        </header>
        <div class="site-body">
          <nav class="account-side">
            <ul class="account-menu">
              <li v-for="item in accountMenu" :key="item.label">
                <a href="#"><svg class="i16"><use :href="'#' + item.icon" /></svg>{{ item.label }}</a>
              </li>
            </ul>
          </nav>
          <div class="content">
            <h1>My Collections</h1>
            <p>Manage your saved collections</p>
            <div class="feed-widget"><svg class="i13"><use href="#grid" /></svg></div>
          </div>
        </div>
      </section>

      <div class="scrollbar">
        <svg class="i8 flip"><use href="#tri-down" /></svg>
        <div class="track"><div class="thumb"></div></div>
        <svg class="i8"><use href="#tri-down" /></svg>
      </div>

      <!-- Floating structure window -->
      <aside class="structure">
        <div class="structure-head">
          <button class="icon-btn" aria-label="Expand all"><svg class="i10"><use href="#expand" /></svg></button>
          <button class="icon-btn" aria-label="Rename with AI"><svg class="i12"><use href="#sparkle" /></svg></button>
          <h3>Structure</h3>
          <button class="icon-btn" aria-label="Close"><svg class="i8"><use href="#close" /></svg></button>
        </div>
        <ul>
          <li
            v-for="(node, i) in tree"
            :key="i"
            :class="['level-' + node.level, { line: node.line, selected: node.selected }]"
          >
            <svg v-if="!node.widget" class="i8"><use :href="node.open ? '#tri-down' : '#tri-right'" /></svg>
            <svg v-if="node.widget" class="i8"><use href="#grid" /></svg>
            <svg v-else class="i12"><use href="#container" /></svg>
            <span>{{ node.label }}</span>
          </li>
        </ul>
        <div class="structure-foot"><i></i><i></i><i></i></div>
      </aside>
    </main>

    <!-- Taskbar -->
    <footer class="taskbar">
      <div class="weather">
        <span class="weather-icon">
          <svg><use href="#weather" /></svg>
          <span class="weather-badge">3</span>
        </span>
        <div><div class="temp">25°C</div><div class="sky">Cloudy</div></div>
      </div>
      <div class="apps">
        <button class="app" aria-label="Start"><svg class="i20"><use href="#windows" /></svg></button>
        <div class="task-search">
          <svg class="i14"><use href="#search" /></svg>
          <input type="text" placeholder="Search" aria-label="Search">
          <svg class="art"><use href="#search-art" /></svg>
        </div>
        <button
          v-for="app in taskApps"
          :key="app.icon"
          class="app"
          :class="{ active: app.active, running: app.running }"
          :aria-label="app.label"
        >
          <span v-if="app.text" :class="app.icon">{{ app.text }}</span>
          <svg v-else class="i20"><use :href="'#' + app.icon" /></svg>
        </button>
      </div>
      <div class="tray">
        <svg class="i10 flip"><use href="#chevron" /></svg>
        <svg class="i14"><use href="#sync" /></svg>
        <div class="tray-lang">ENG<br>IN</div>
        <div class="tray-icons">
          <svg class="i14"><use href="#network" /></svg>
          <svg class="i14"><use href="#speaker" /></svg>
        </div>
        <div class="clock">09:20 PM<br>06-01-2026</div>
      </div>
    </footer>
  </div>
</template>

<style>
body {
  background: #fff;
}
</style>

<style scoped>
.screen {
  display: flex;
  flex-direction: column;
  height: 100vh;
  min-width: 1280px;
  overflow: hidden;
  font-family: Roboto, sans-serif;
  font-size: 10px;
  line-height: 14px;
}

.screen *,
.screen *::before,
.screen *::after {
  box-sizing: border-box;
}

.sprite {
  position: absolute;
  width: 0;
  height: 0;
}

svg {
  display: block;
  flex: none;
}

.i6 { width: 6px; height: 6px; }
.i8 { width: 8px; height: 8px; }
.i10 { width: 10px; height: 10px; }
.i12 { width: 12px; height: 12px; }
.i13 { width: 13px; height: 13px; }
.i14 { width: 14px; height: 14px; }
.i16 { width: 16px; height: 16px; }
.i20 { width: 20px; height: 20px; }

.flip {
  transform: rotate(180deg);
}

button,
input,
select {
  margin: 0;
  padding: 0;
  border: 0;
  background: none;
  color: inherit;
  font: inherit;
}

button {
  cursor: pointer;
}

a {
  color: inherit;
  text-decoration: none;
}

h1, h2, h3, p, ul {
  margin: 0;
  padding: 0;
  list-style: none;
}

.icon-btn {
  display: flex;
  align-items: center;
  justify-content: center;
  flex: none;
}

/* Browser */
.browser {
  flex: none;
  background: #1f1e23;
  color: #e3e3e6;
  font-family: "Open Sans", sans-serif;
  font-size: 9px;
}

.tab-strip {
  display: flex;
  align-items: center;
  height: 32px;
  padding-left: 2px;
}

.tab {
  display: flex;
  align-items: center;
  gap: 7px;
  width: 197px;
  height: 12px;
  padding: 0 10px;
  border-right: 1px solid #38373c;
  color: #b4b4b9;
}

.tab.plain {
  border-right-color: transparent;
}

.tab.active {
  width: 193px;
  height: 26px;
  margin-right: 4px;
  padding-right: 8px;
  border: 0;
  border-radius: 6px;
  background: #3b3a3f;
  color: #e3e3e6;
}

.tab-title {
  flex: 1;
  overflow: hidden;
  white-space: nowrap;
  mask-image: linear-gradient(90deg, #000 90%, transparent);
}

.tab-close {
  width: 10px;
  height: 12px;
}

.new-tab {
  width: 28px;
  height: 24px;
}

.window-buttons {
  display: flex;
  margin-left: auto;
}

.window-buttons button {
  width: 37px;
  height: 32px;
}

.toolbar {
  display: flex;
  align-items: center;
  height: 32px;
  padding: 0 6px;
  border-radius: 6px 6px 0 0;
  background: #3b3a3f;
}

.tool {
  width: 24px;
  height: 24px;
}

.dim {
  color: #77767b;
}

.address-zone {
  display: flex;
  flex: 1;
  align-items: center;
  gap: 7px;
  padding: 0 87px 0 133px;
}

.address {
  display: flex;
  flex: 1;
  align-items: center;
  height: 26px;
  padding: 0 10px 0 7px;
  border-radius: 6px;
  background: #242328;
}

.address input {
  flex: 1;
  min-width: 0;
  margin-left: 11px;
  color: #d6d6da;
  font-size: 11px;
}

.address > svg {
  color: #b0b0b5;
}

.address-sep {
  width: 1px;
  height: 14px;
  margin: 0 7px 0 6px;
  background: #5a595e;
}

.shield {
  position: relative;
  margin-right: 13px;
}

.shield-count {
  position: absolute;
  top: -3px;
  right: -5px;
  width: 10px;
  height: 10px;
  border-radius: 5px;
  background: #6b6b7b;
  color: #fff;
  font-size: 7px;
  line-height: 10px;
  text-align: center;
}

.ext-bw {
  color: #1d6b1d;
  font-size: 9px;
  font-weight: 700;
}

.bar-sep {
  width: 1px;
  height: 12px;
  margin: 0 6px 0 7px;
  background: #1f1e23;
}

.bookmarks {
  display: flex;
  align-items: center;
  height: 28px;
  padding: 0 12px 4px 0;
  background: #3b3a3f;
}

.apps-btn {
  width: 27px;
  padding-left: 5px;
}

.apps-btn + .bar-sep {
  margin-right: 11px;
}

.bm {
  display: flex;
  align-items: center;
  gap: 5px;
  width: 123px;
  white-space: nowrap;
}

.bm.short {
  width: 76px;
}

.bm.all {
  width: auto;
  gap: 6px;
  margin-left: 6px;
}

.bm-g {
  width: 13px;
  height: 13px;
  border-radius: 1px;
  background: #58a700;
  color: #fff;
  font-weight: 600;
  line-height: 13px;
  text-align: center;
}

.bm-more {
  width: 14px;
  margin-left: auto;
  margin-right: 4px;
}

/* Editor bar */
.editor-bar {
  display: grid;
  grid-template-columns: 1fr 324px 1fr;
  flex: none;
  height: 39px;
  border-bottom: 1px solid #323337;
  background: #1f2124;
  color: #d5d8dc;
}

.bar-left,
.bar-right {
  display: flex;
  align-items: center;
}

.bar-left {
  padding-left: 19px;
}

.bar-left .icon-btn {
  width: 37px;
  height: 37px;
}

.e-logo {
  display: flex;
  align-items: center;
  justify-content: center;
  gap: 2px;
  width: 28px;
  height: 28px;
  margin-right: 4px;
  border-radius: 50%;
  background: #fff;
}

.e-stem {
  width: 3px;
  height: 12px;
  background: #1f2124;
}

.e-lines {
  width: 7px;
  height: 12px;
  border-top: 2px solid #1f2124;
  border-bottom: 2px solid #1f2124;
  background: linear-gradient(#1f2124, #1f2124) center / 7px 2px no-repeat;
}

.bar-center {
  display: flex;
  border-right: 1px solid #323337;
  border-left: 1px solid #323337;
}

.doc-name {
  display: flex;
  align-items: center;
  justify-content: center;
  gap: 10px;
  width: 123px;
  font-size: 11px;
  font-weight: 500;
  color: #fff;
}

.devices {
  display: flex;
  flex: 1;
  padding-left: 9px;
  border-left: 1px solid #323337;
}

.device {
  width: 45px;
  border-bottom: 3px solid transparent;
  padding-top: 3px;
  color: #9da5ae;
}

.device.active {
  border-bottom-color: #fff;
  color: #e6e8ea;
}

.bar-right {
  justify-content: flex-end;
}

.bar-right .icon-btn {
  width: 26px;
  height: 28px;
  margin-right: 12px;
}

.news {
  position: relative;
}

.news::after {
  content: "";
  position: absolute;
  top: 3px;
  right: 2px;
  width: 6px;
  height: 6px;
  border-radius: 50%;
  background: #f0abfc;
}

.bar-right .layers {
  border-radius: 3px;
  background: #434548;
}

.ue {
  display: flex;
  align-items: center;
  justify-content: center;
  gap: 1px;
  width: 18px;
  height: 18px;
  margin: 0 16px 0 4px;
  border-radius: 50%;
  background: #5a1fc4;
  color: #fff;
  font-size: 8px;
  font-weight: 700;
}

.ue-lines {
  width: 5px;
  height: 5px;
  background: repeating-linear-gradient(#fff 0 1px, transparent 1px 2px);
}

.publish {
  width: 87px;
  align-self: stretch;
  background: #f0abfc;
  color: #2d1c33;
  font-size: 13px;
  font-weight: 500;
}

.publish-more {
  display: flex;
  align-items: center;
  justify-content: center;
  align-self: stretch;
  width: 33px;
  border-left: 1px solid #dd93ea;
  background: #f0abfc;
  color: #1f2124;
}

/* Workspace */
.workspace {
  position: relative;
  display: flex;
  flex: 1;
  min-height: 0;
}

.panel {
  position: relative;
  width: 240px;
  flex: none;
  background: #1f2124;
  color: #d5d8dc;
}

.panel-title {
  padding: 11px 0 12px;
  border-bottom: 1px solid #2f3136;
  color: #fff;
  font-size: 12px;
  font-weight: 700;
  line-height: 15px;
  text-align: center;
}

.panel-tabs {
  display: flex;
  border-bottom: 1px solid #2f3136;
  font-size: 8px;
  font-weight: 500;
}

.panel-tabs button {
  display: flex;
  flex: 1 1 auto;
  flex-direction: column;
  align-items: center;
  gap: 2px;
  height: 45px;
  padding: 9px 0 0;
  color: #babfc5;
}

.panel-tabs button.active {
  border-bottom: 3px solid #fff;
  color: #fff;
}

.sections {
  padding-top: 13px;
}

.section {
  display: flex;
  align-items: center;
  gap: 6px;
  width: 100%;
  height: 39px;
  padding-left: 16px;
  border-bottom: 1px solid #34363b;
  color: #f1f2f3;
  font-size: 11px;
  font-weight: 700;
}

.section + .section {
  height: 38px;
}

.section.open {
  border-bottom: 0;
}

.filters {
  display: flex;
  flex-direction: column;
  padding: 6px 16px 0;
}

.filters-label {
  margin-bottom: 6px;
}

.repeater {
  border: 1px solid #3a3d42;
}

.repeater-head {
  display: flex;
  height: 33px;
  border-bottom: 1px solid #3a3d42;
}

.repeater-name {
  flex: 1;
  padding-left: 8px;
  background: #2a2c31;
  text-align: left;
}

.repeater-copy {
  display: flex;
  align-items: center;
  justify-content: center;
  width: 32px;
  border-left: 1px solid #3a3d42;
}

.repeater-body {
  padding: 12px 8px 8px;
}

.field {
  display: flex;
  align-items: center;
}

.field label {
  width: 91px;
}

.select {
  position: relative;
  flex: 1;
}

.select select {
  width: 100%;
  height: 22px;
  padding: 0 4px;
  border: 1px solid #3f444b;
  border-radius: 3px;
  background: #1f2124;
  appearance: none;
}

.select svg {
  position: absolute;
  top: 7px;
  right: 4px;
  pointer-events: none;
}

.tag-card {
  margin-top: 7px;
  padding: 13px 15px;
  border: 1px solid #4d5156;
  border-radius: 8px;
  background: #33373b;
}

.tag-value {
  margin-top: 4px;
  padding-bottom: 11px;
  border-bottom: 1px solid #484c51;
  color: #fff;
  font-size: 11px;
  line-height: 16px;
}

.tag-actions {
  display: flex;
  justify-content: space-between;
  margin-top: 9px;
  color: #fff;
  font-weight: 700;
  font-size: 9px;
}

.visibility {
  padding: 12px;
  background: #242829;
}

.visibility .field label {
  width: 87px;
}

.no-rules {
  margin: 10px 0 7px;
  color: #8f969d;
  font-size: 9px;
  font-style: italic;
}

.rule-actions {
  display: flex;
  gap: 3px;
}

.btn {
  height: 25px;
  padding: 0 12px;
  border-radius: 2px;
  background: #515962;
  color: #fff;
  font-weight: 500;
}

.add-item {
  display: flex;
  align-items: center;
  align-self: center;
  gap: 5px;
  margin-top: 12px;
  padding: 0 13px;
}

.collapse {
  position: absolute;
  z-index: 1;
  top: 328px;
  left: 100%;
  display: flex;
  align-items: center;
  justify-content: center;
  width: 12px;
  height: 40px;
  background: #1f2124;
}

/* Site */
.site {
  display: flex;
  flex: 1;
  flex-direction: column;
  min-width: 0;
  background: #fff;
  color: #1b3d45;
  font-family: "Liberation Sans", Arial, sans-serif;
}

.site-header {
  display: flex;
  flex: none;
  align-items: center;
  height: 57px;
  padding: 0 26px 0 24px;
  border-bottom: 1px solid #c4c7ca;
}

.site-logo svg {
  width: 52px;
  height: 38px;
}

.logo-a,
.logo-b {
  font-family: "Open Sans", sans-serif;
  font-size: 9px;
  font-weight: 700;
}

.logo-a {
  fill: #fb8323;
}

.logo-b {
  fill: #fff;
}

.site-nav {
  display: flex;
  gap: 27px;
  margin-left: 31px;
  font-size: 13px;
  font-weight: 700;
}

.lang {
  display: flex;
  align-items: center;
  gap: 3px;
  height: 20px;
  margin-left: 36px;
  padding: 0 5px 0 1px;
  border: 1px solid #e87817;
  background: #000;
  box-shadow: 0 1px 6px rgba(0, 0, 0, 0.5);
  color: #f4731c;
  font-family: "Open Sans", sans-serif;
  font-size: 11px;
  font-weight: 700;
}

.flag {
  width: 20px;
  height: 14px;
}

.lang-arrow {
  margin-left: 2px;
  color: #666;
  font-size: 6px;
}

.site-actions {
  display: flex;
  align-items: center;
  margin-left: auto;
  color: #222;
}

.site-actions .icon-btn {
  width: 37px;
}

.site-actions .user {
  gap: 3px;
  width: 48px;
  color: #555;
}

.site-body {
  display: flex;
  flex: 1;
}

.account-side {
  flex: none;
  width: 240px;
  padding: 17px 0 0 28px;
  border-left: 1px solid #e2e2e0;
  background: #fffef8;
  font-size: 13px;
}

.account-menu {
  display: grid;
  grid-auto-rows: 1fr;
  height: 426px;
}

.account-menu a {
  display: flex;
  align-items: center;
  gap: 8px;
  height: 100%;
}

.account-menu svg {
  color: #75797d;
}

.content {
  flex: 1;
  padding: 30px 31px 0 31px;
}

.content h1 {
  color: #000;
  font-size: 22px;
  line-height: 26px;
}

.content p {
  color: #84888c;
  font-family: "Open Sans", sans-serif;
  font-size: 12px;
  line-height: 23px;
}

.feed-widget {
  display: flex;
  align-items: center;
  justify-content: center;
  height: 37px;
  margin-top: 19px;
  border: 1px solid #f0abfc;
  background: #dcdee1;
  color: #b3b6bb;
}

.scrollbar {
  display: flex;
  flex: none;
  flex-direction: column;
  align-items: center;
  width: 12px;
  padding: 3px 0 1px;
  background: #fcfcfc;
  color: #8b8b8b;
}

.track {
  flex: 1;
  padding: 4px 0;
}

.thumb {
  width: 7px;
  height: 70%;
  border-radius: 4px;
  background: #8b8b8b;
}

/* Structure window */
.structure {
  position: absolute;
  top: 41px;
  right: 24px;
  width: 192px;
  height: 367px;
  display: flex;
  flex-direction: column;
  border-radius: 3px;
  background: #1f2124;
  box-shadow: 0 2px 12px rgba(0, 0, 0, 0.2);
  color: #d5d8dc;
  font-size: 10px;
}

.structure-head {
  display: flex;
  align-items: center;
  height: 30px;
  padding: 0 9px;
  gap: 16px;
  border-bottom: 1px solid #2f3136;
}

.structure-head h3 {
  flex: 1;
  padding-right: 14px;
  color: #fff;
  font-size: 10px;
  font-weight: 500;
  text-align: center;
}

.structure ul {
  flex: 1;
}

.structure li {
  display: flex;
  align-items: center;
  gap: 6px;
  height: 24px;
  padding-left: 10px;
}

.structure li.line {
  height: 25px;
  border-top: 1px solid #303237;
}

.structure li.selected {
  background: #323337;
}

.structure li.level-1 { padding-left: 18px; }
.structure li.level-2 { padding-left: 26px; }
.structure li.level-3 { padding-left: 50px; gap: 8px; }

.structure-foot {
  display: flex;
  align-items: center;
  justify-content: center;
  gap: 1px;
  height: 12px;
  border-top: 1px solid #303237;
}

.structure-foot i {
  width: 2px;
  height: 2px;
  background: #b5b9be;
}

/* Taskbar */
.taskbar {
  display: flex;
  flex: none;
  align-items: center;
  height: 38px;
  padding-bottom: 1px;
  border-top: 1px solid #3a3938;
  background: #211f1e;
  color: #f0f0f0;
  font-family: "Open Sans", sans-serif;
  font-size: 9px;
  line-height: 13px;
}

.weather,
.tray {
  display: flex;
  flex: 1;
  align-items: center;
}

.weather {
  gap: 5px;
  padding-left: 15px;
}

.weather-icon {
  position: relative;
}

.weather-icon > svg {
  width: 21px;
  height: 14px;
}

.weather-badge {
  position: absolute;
  top: -7px;
  right: -2px;
  width: 13px;
  height: 13px;
  border-radius: 50%;
  background: #ff8f9c;
  color: #3a1418;
  text-align: center;
}

.sky {
  color: #bdbdbd;
}

.apps {
  display: flex;
  align-items: center;
}

.app {
  position: relative;
  display: flex;
  align-items: center;
  justify-content: center;
  width: 35px;
  height: 32px;
}

.app.active {
  border-radius: 4px;
  background: #2f2d2d;
}

.app.active::after,
.app.running::after {
  content: "";
  position: absolute;
  bottom: 0;
  width: 5px;
  height: 2px;
  border-radius: 1px;
  background: #9a9a9a;
}

.app.active::after {
  width: 13px;
  background: #d59be4;
}

.photoshop {
  width: 18px;
  height: 18px;
  border-radius: 4px;
  background: #001e36;
  color: #31a8ff;
  font-size: 10px;
  font-weight: 700;
  line-height: 17px;
  text-align: center;
}

.task-search {
  display: flex;
  align-items: center;
  gap: 7px;
  width: 176px;
  height: 26px;
  margin: 0 2px;
  padding: 0 4px 0 8px;
  border: 1px solid #4a4848;
  border-radius: 13px;
  background: #3c3a3a;
}

.task-search input {
  flex: 1;
  min-width: 0;
  font-size: 11px;
}

.task-search input::placeholder {
  color: #c8c8c8;
}

.art {
  width: 38px;
  height: 16px;
}

.tray {
  justify-content: flex-end;
  gap: 14px;
  padding-right: 15px;
}

.tray-lang {
  text-align: center;
}

.tray-icons {
  display: flex;
  gap: 4px;
}

.clock {
  min-width: 50px;
  text-align: right;
}
</style>
